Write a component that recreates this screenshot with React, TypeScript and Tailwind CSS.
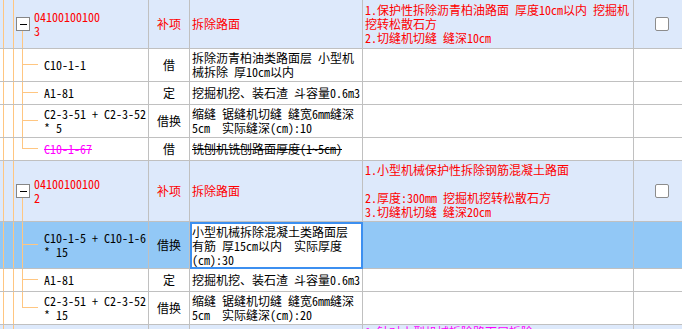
import type { ReactNode } from "react"

type Row = {
  kind: "group" | "child" | "stub"
  h: string
  code?: string[]
  type?: string
  name?: string[]
  note?: string[]
  last?: boolean
  selected?: boolean
  strike?: boolean
}

const ROWS: Row[] = [
  {
    kind: "group",
    h: "h-[49px]",
    code: ["04100100100", "3"],
    type: "补项",
    name: ["拆除路面"],
    note: ["1.保护性拆除沥青柏油路面 厚度10cm以内 挖掘机", "挖转松散石方", "2.切缝机切缝 缝深10cm"],
  },
  { kind: "child", h: "h-[33px]", code: ["C10-1-1"], type: "借", name: ["拆除沥青柏油类路面层 小型机", "械拆除 厚10cm以内"] },
  { kind: "child", h: "h-[23px]", code: ["A1-81"], type: "定", name: ["挖掘机挖、装石渣 斗容量0.6m3"] },
  {
    kind: "child",
    h: "h-[33px]",
    code: ["C2-3-51 + C2-3-52", "* 5"],
    type: "借换",
    name: ["缩缝 锯缝机切缝 缝宽6mm缝深", "5cm  实际缝深(cm):10"],
  },
  { kind: "child", h: "h-[23px]", code: ["C10-1-67"], type: "借", name: ["铣刨机铣刨路面厚度(1~5cm)"], last: true, strike: true },
  {
    kind: "group",
    h: "h-[61px]",
    code: ["04100100100", "2"],
    type: "补项",
    name: ["拆除路面"],
    note: ["1.小型机械保护性拆除钢筋混凝土路面", "", "2.厚度:300mm 挖掘机挖转松散石方", "3.切缝机切缝 缝深20cm"],
  },
  {
    kind: "child",
    h: "h-[47px]",
    code: ["C10-1-5 + C10-1-6", "* 15"],
    type: "借换",
    name: ["小型机械拆除混凝土类路面层", "有筋 厚15cm以内  实际厚度", "(cm):30"],
    selected: true,
  },
  { kind: "child", h: "h-[23px]", code: ["A1-81"], type: "定", name: ["挖掘机挖、装石渣 斗容量0.6m3"] },
  {
    kind: "child",
    h: "h-[33px]",
    code: ["C2-3-51 + C2-3-52", "* 15"],
    type: "借换",
    name: ["缩缝 锯缝机切缝 缝宽6mm缝深", "5cm  实际缝深(cm):20"],
    last: true,
  },
  { kind: "stub", h: "h-[30px]", note: ["1.针对小型机械拆除路面层拆除"] },
]

function Lines({ lines }: { lines: string[] }) {
  return (
    <div className="whitespace-pre">
      {lines.map((l, i) => (
        <div key={i} className="h-[14px]">
          {l}
        </div>
      ))}
    </div>
  )
}

function Checkbox() {
  return <div className="w-[14px] h-[14px] rounded-[2px] border border-[#8c8c8c] bg-white" />
}

function TreeCell({ row }: { row: Row }) {
  let conn: ReactNode
  let pad = "pl-[6px]"
  if (row.kind === "group") {
    pad = "pl-[4px]"
    conn = (
      <>
        <div className="w-[3px] border-l border-[#ffc681]" />
        <div className="w-[14px] flex flex-col">
          <div className="flex-1" />
          <div className="h-[14px] border border-[#868686] bg-white flex items-center justify-center">
            <div className="w-[7px] h-px bg-black" />
          </div>
          <div className="flex-1 ml-[6px] border-l border-[#ffc681]" />
        </div>
      </>
    )
  } else if (row.kind === "child") {
    conn = (
      <>
        <div className="w-[9px] border-l border-[#ffc681]" />
        <div className="w-[16px] flex flex-col">
          <div className="h-1/2 border-l border-b border-[#ffc681]" />
          <div className={row.last ? "flex-1" : "flex-1 border-l border-[#ffc681]"} />
        </div>
      </>
    )
  } else {
    conn = <div className="w-[9px] border-l border-[#ffc681]" />
  }

  const color = row.kind === "group" ? "text-[#ff0000]" : row.strike ? "text-[#ff00ff] line-through" : "text-black"

  return (
    <div className="w-[149px] shrink-0 flex border-r border-b border-[#c0c0c0]">
      <div className="w-[3px]" />
      <div className="w-[10px] border-l border-[#ffc681]" />
      {conn}
      {row.code && (
        <div className={`flex items-center ${pad} ${color}`}>
          <Lines lines={row.code} />
        </div>
      )}
    </div>
  )
}

function TableRow({ row }: { row: Row }) {
  const bg = row.kind === "child" ? (row.selected ? "bg-[#92c8f6]" : "bg-white") : "bg-[#dde9fb]"
  const red = row.kind === "group"
  const cell = "shrink-0 border-r border-b border-[#c0c0c0] flex items-center overflow-hidden"

  return (
    <div className={`flex ${row.h} ${bg}`}>
      <TreeCell row={row} />
      <div className={`w-[41px] justify-center ${cell} ${red ? "text-[#ff0000]" : ""}`}>{row.type}</div>
      {row.selected ? (
        <div className="w-[173px] shrink-0 border-2 border-[#3c8ff0] bg-white flex items-center overflow-hidden">
          <Lines lines={row.name ?? []} />
        </div>
      ) : (
        <div
          className={`w-[173px] pl-[2px] ${cell} ${red ? "text-[#ff0000]" : ""} ${row.strike ? "line-through" : ""}`}
        >
          {row.name && <Lines lines={row.name} />}
        </div>
      )}
      <div
        className={`w-[271px] pl-[2px] ${cell} ${row.kind === "stub" ? "items-start text-[#ff00ff]" : "text-[#ff0000]"}`}
      >
        {row.note && <Lines lines={row.note} />}
      </div>
      <div className={`w-[56px] justify-center ${cell}`}>{row.kind === "group" && <Checkbox />}</div>
    </div>
  )
}

export default function App() {
  return (
    <div className="w-[682px] h-[329px] overflow-hidden bg-white text-[12px] leading-[14px] font-['Noto_Sans_Mono_CJK_SC','Noto_Sans_CJK_SC',monospace]">
      {ROWS.map((r, i) => (
        <TableRow key={i} row={r} />
      ))}
    </div>
  )
}
